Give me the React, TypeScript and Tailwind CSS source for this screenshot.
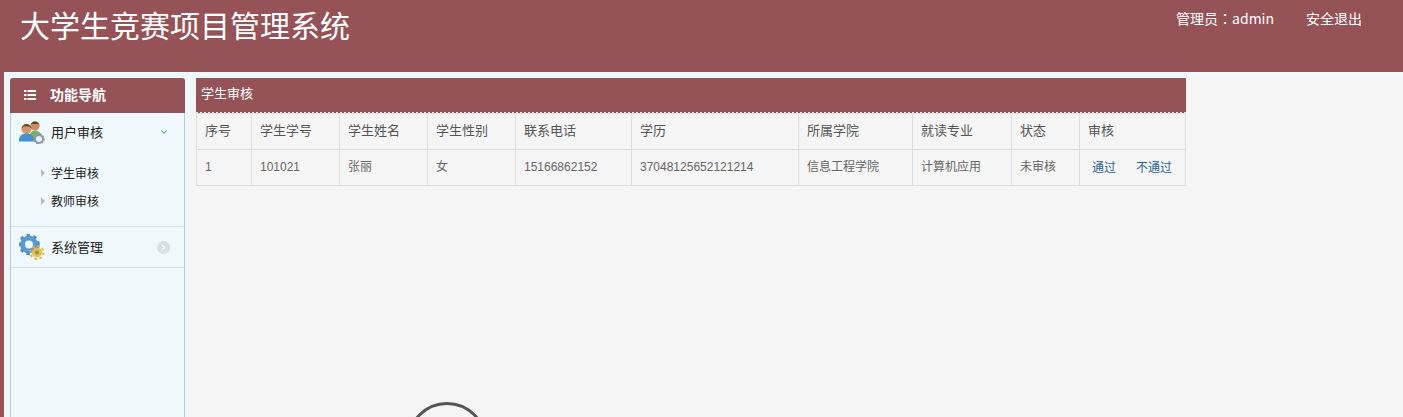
import { ChevronDown, ChevronRight } from "lucide-react";

const widths = [55, 88, 88, 88, 116, 167, 114, 99, 68, 106];
const heads = ["序号", "学生学号", "学生姓名", "学生性别", "联系电话", "学历", "所属学院", "就读专业", "状态", "审核"];
const cells = ["1", "101021", "张丽", "女", "15166862152", "37048125652121214", "信息工程学院", "计算机应用", "未审核"];

function UsersIcon() {
  return (
    <svg width="26" height="24" viewBox="0 0 26 24">
      <circle cx="16" cy="6" r="4.500" fill="#c98f5c" />
      <path d="M11.500 6a4.500 4.500 0 0 1 9 0l-1-2h-7z" fill="#5f4526" />
      <path d="M10 19c0-6 3-8.500 6-8.500s7 2.500 7 7.500v2H10z" fill="#7fae6a" />
      <circle cx="7.500" cy="9" r="5" fill="#d19a68" />
      <path d="M2.500 9a5 5 0 0 1 10 0l-2-2.500h-6z" fill="#7a4a24" />
      <path d="M0 20c0-4 3-6.500 7.500-6.500S15 16 15 20v1.500H0z" fill="#4a8fd0" />
      <circle cx="20" cy="19" r="4" fill="#e8eef2" stroke="#8a9aa5" strokeWidth="2" />
      <circle cx="20" cy="19" r="5" fill="none" stroke="#8a9aa5" strokeWidth="1.500" strokeDasharray="1.500 1.500" />
    </svg>
  );
}

function GearsIcon() {
  return (
    <svg width="26" height="26" viewBox="0 0 26 26">
      <circle cx="10" cy="10.500" r="6.500" fill="none" stroke="#5a9ad2" strokeWidth="5" />
      <circle cx="10" cy="10.500" r="9.500" fill="none" stroke="#4f8fc6" strokeWidth="2.500" strokeDasharray="3.500 3.500" />
      <circle cx="18" cy="18.500" r="5" fill="#e8bd50" />
      <circle cx="18" cy="18.500" r="6.500" fill="none" stroke="#e3b340" strokeWidth="2" strokeDasharray="2.500 2.500" />
      <circle cx="18" cy="18.500" r="2" fill="#7c9a4a" />
    </svg>
  );
}

function SubItem({ label }: { label: string }) {
  return (
    <div className="flex h-7 items-center pl-[30px] text-[12px] text-[#222]">
      <span className="mr-[6px] h-0 w-0 border-y-[4px] border-l-[4px] border-y-transparent border-l-[#bbb]" />
      {label}
    </div>
  );
}

export default function App() {
  return (
    <div className="flex h-[417px] flex-col overflow-hidden bg-[#955257]">
      <header className="flex h-[72px] shrink-0 items-start justify-between font-['Noto_Sans_CJK_SC','Liberation_Sans',sans-serif] text-white">
        <h1 className="pl-5 pt-[3px] text-[30px] leading-[42px] font-normal">大学生竞赛项目管理系统</h1>
        <div className="flex gap-8 pr-[41px] pt-[8px] text-[14px] leading-5 text-white">
          <span className="font-['Noto_Sans_CJK_TC','Liberation_Sans',sans-serif]">管理员：admin</span>
          <span>安全退出</span>
        </div>
      </header>
      <div className="ml-1 flex min-h-0 flex-1 bg-[#f5f5f5] font-['Noto_Sans_CJK_SC','Liberation_Sans',sans-serif]">
        <aside className="w-[186px] shrink-0 bg-[#eff8fc] pl-[6px] pr-[5px] pt-[6px]">
          <div className="h-full rounded-t-[3px] border-x border-[#b9cdd6]">
            <div className="-mx-px flex h-[35px] items-center rounded-t-[3px] bg-[#955257] pb-[2px] pl-[14px] text-[14px] font-bold text-white">
              <svg width="12" height="10" viewBox="0 0 12 10" className="mr-[14px]" fill="#fff">
                <rect x="0" y="0" width="2.500" height="2" />
                <rect x="3.500" y="0" width="8.500" height="2" />
                <rect x="0" y="4" width="2.500" height="2" />
                <rect x="3.500" y="4" width="8.500" height="2" />
                <rect x="0" y="8" width="2.500" height="2" />
                <rect x="3.500" y="8" width="8.500" height="2" />
              </svg>
              功能导航
            </div>
            <div className="border-b border-[#d5e3e9] pb-[11px]">
              <div className="flex h-[40px] items-center pb-[2px] pl-2 pr-[15px] text-[13px] text-[#222]">
                <span className="mr-[6px] flex w-[26px] justify-center"><UsersIcon /></span>
                <span className="flex-1">用户审核</span>
                <ChevronDown size={10} color="#4f9a62" strokeWidth={2.500} />
              </div>
              <div className="pt-[6px]">
                <SubItem label="学生审核" />
                <SubItem label="教师审核" />
              </div>
            </div>
            <div className="flex h-[41px] items-center border-b border-[#d5e3e9] pl-2 pr-[14px] text-[13px] text-[#222]">
              <span className="mr-[6px] flex w-[26px] justify-center"><GearsIcon /></span>
              <span className="flex-1">系统管理</span>
              <span className="flex h-[13px] w-[13px] items-center justify-center rounded-full bg-[#d3e1e8]">
                <ChevronRight size={9} color="#fff" strokeWidth={3} />
              </span>
            </div>
          </div>
        </aside>
        <main className="relative min-w-0 flex-1">
          <div className="h-[6px] bg-[#f1f7fa]" />
          <div className="ml-[6px] w-[990px]">
            <div className="h-[36px] border-b-2 border-dotted border-[#f5e3e3] bg-[#955257] pl-[5px] pt-[5px] text-[13px] leading-5 text-white">
              学生审核
            </div>
            <table className="-mt-px w-[990px] table-fixed border-collapse border border-[#ddd] text-[12px] text-[#666]">
              <colgroup>
                {widths.map((w, i) => (
                  <col key={i} style={{ width: w }} />
                ))}
              </colgroup>
              <thead>
                <tr className="h-[36px]">
                  {heads.map((h) => (
                    <th key={h} className="border border-[#ddd] px-2 pb-[4px] text-left text-[13px] font-normal text-[#555]">{h}</th>
                  ))}
                </tr>
              </thead>
              <tbody>
                <tr className="h-[36px]">
                  {cells.map((c) => (
                    <td key={c} className="border border-[#ddd] px-2 pb-[2px] font-['Liberation_Sans','Noto_Sans_CJK_SC',sans-serif]">{c}</td>
                  ))}
                  <td className="border border-[#ddd] pb-[2px] pl-[12px] text-[#2a6496]">
                    <span className="mr-5">通过</span>
                    <span>不通过</span>
                  </td>
                </tr>
              </tbody>
            </table>
          </div>
          <div className="absolute left-[217px] top-[330px] h-[80px] w-[80px] rounded-full border-[3px] border-[#555]" />
        </main>
      </div>
    </div>
  );
}
